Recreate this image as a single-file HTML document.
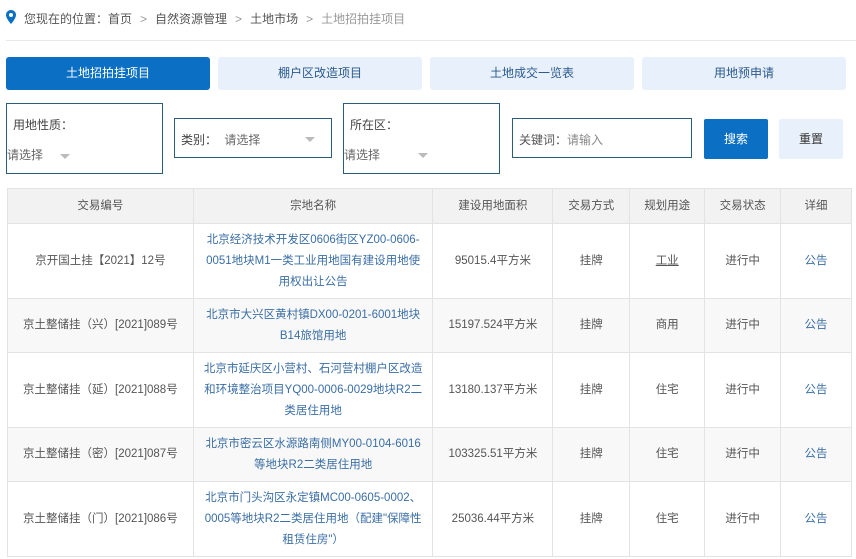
<!DOCTYPE html><html><head><meta charset="utf-8"><style>
*{margin:0;padding:0;box-sizing:border-box}
body{width:856px;height:559px;overflow:hidden;background:#fff;font-family:"Liberation Sans","Noto Sans CJK SC",sans-serif;font-size:12px;color:#333;position:relative}
.a{position:absolute}
.bc{left:24px;top:10px;color:#555;font-size:12px}
.bc span{color:#999;margin:0 8px}
.line{left:6px;right:0;top:40px;height:1px;background:#e8e8e8}
.tab{top:57px;height:33px;width:204px;border-radius:3px;background:#e8f0fb;color:#2b5a8e;text-align:center;line-height:33px;font-size:12px}
.tab.on{background:#0b6fc4;color:#fff}
.box{border:1px solid #2b5c7a;color:#444}
.tri{display:inline-block;border-left:5px solid transparent;border-right:5px solid transparent;border-top:5px solid #bbb}
table{position:absolute;left:7px;top:188px;width:845px;border-collapse:collapse;font-size:11.5px}
td,th{border:1px solid #e3e3e3;text-align:center;color:#555;font-weight:normal;line-height:21px}
th{background:#f2f2f2;height:35px;color:#555}
tr.g td{background:#f8f8f8}
.l{color:#3a6ea5}
</style></head><body>
<svg class="a" style="left:6px;top:10px" width="10" height="14" viewBox="0 0 10 14"><path d="M5 0C2.2 0 0 2.2 0 5c0 3.5 5 9 5 9s5-5.5 5-9C10 2.2 7.8 0 5 0z" fill="#0b6fc4"/><circle cx="5" cy="5" r="2" fill="#fff"/></svg>
<div class="a bc">您现在的位置：首页<span>&gt;</span>自然资源管理<span>&gt;</span>土地市场<span>&gt;</span><b style="font-weight:normal;color:#999">土地招拍挂项目</b></div>
<div class="a line"></div>
<div class="a tab on" style="left:6px">土地招拍挂项目</div>
<div class="a tab" style="left:218px">棚户区改造项目</div>
<div class="a tab" style="left:430px">土地成交一览表</div>
<div class="a tab" style="left:642px">用地预申请</div>
<div class="a box" style="left:6px;top:103px;width:157px;height:71px"><div class="a" style="left:6px;top:12px">用地性质：</div><div class="a" style="left:0;top:42px;color:#666">请选择 <span class="tri" style="margin-left:14px"></span></div></div>
<div class="a box" style="left:174px;top:118px;width:158px;height:40px"><div class="a" style="left:6px;top:12px">类别： <span style="color:#666;margin-left:4px">请选择</span></div><span class="tri a" style="left:130px;top:18px"></span></div>
<div class="a box" style="left:343px;top:103px;width:157px;height:71px"><div class="a" style="left:6px;top:12px">所在区：</div><div class="a" style="left:0;top:42px;color:#666">请选择</div><span class="tri a" style="left:74px;top:49px"></span></div>
<div class="a box" style="left:512px;top:118px;width:180px;height:40px"><div class="a" style="left:6px;top:12px;color:#555">关键词：<span style="color:#888">请输入</span></div></div>
<div class="a" style="left:704px;top:119px;width:64px;height:40px;background:#0b6fc4;color:#fff;border-radius:2px;text-align:center;line-height:40px">搜索</div>
<div class="a" style="left:779px;top:119px;width:64px;height:40px;background:#e8f0fb;color:#333;border-radius:2px;text-align:center;line-height:40px">重置</div>
<table>
<colgroup><col style="width:186px"><col style="width:240px"><col style="width:120px"><col style="width:77px"><col style="width:75px"><col style="width:76px"><col style="width:71px"></colgroup>
<tr><th>交易编号</th><th>宗地名称</th><th>建设用地面积</th><th>交易方式</th><th>规划用途</th><th>交易状态</th><th>详细</th></tr>
<tr style="height:75px"><td>京开国土挂【2021】12号</td><td class="l">北京经济技术开发区0606街区YZ00-0606-<br>0051地块M1一类工业用地国有建设用地使<br>用权出让公告</td><td>95015.4平方米</td><td>挂牌</td><td><u>工业</u></td><td>进行中</td><td class="l">公告</td></tr>
<tr class="g" style="height:54px"><td>京土整储挂（兴）[2021]089号</td><td class="l">北京市大兴区黄村镇DX00-0201-6001地块<br>B14旅馆用地</td><td>15197.524平方米</td><td>挂牌</td><td>商用</td><td>进行中</td><td class="l">公告</td></tr>
<tr style="height:75px"><td>京土整储挂（延）[2021]088号</td><td class="l">北京市延庆区小营村、石河营村棚户区改造<br>和环境整治项目YQ00-0006-0029地块R2二<br>类居住用地</td><td>13180.137平方米</td><td>挂牌</td><td>住宅</td><td>进行中</td><td class="l">公告</td></tr>
<tr class="g" style="height:54px"><td>京土整储挂（密）[2021]087号</td><td class="l">北京市密云区水源路南侧MY00-0104-6016<br>等地块R2二类居住用地</td><td>103325.51平方米</td><td>挂牌</td><td>住宅</td><td>进行中</td><td class="l">公告</td></tr>
<tr style="height:75px"><td>京土整储挂（门）[2021]086号</td><td class="l">北京市门头沟区永定镇MC00-0605-0002、<br>0005等地块R2二类居住用地（配建"保障性<br>租赁住房"）</td><td>25036.44平方米</td><td>挂牌</td><td>住宅</td><td>进行中</td><td class="l">公告</td></tr>
</table>
</body></html>
